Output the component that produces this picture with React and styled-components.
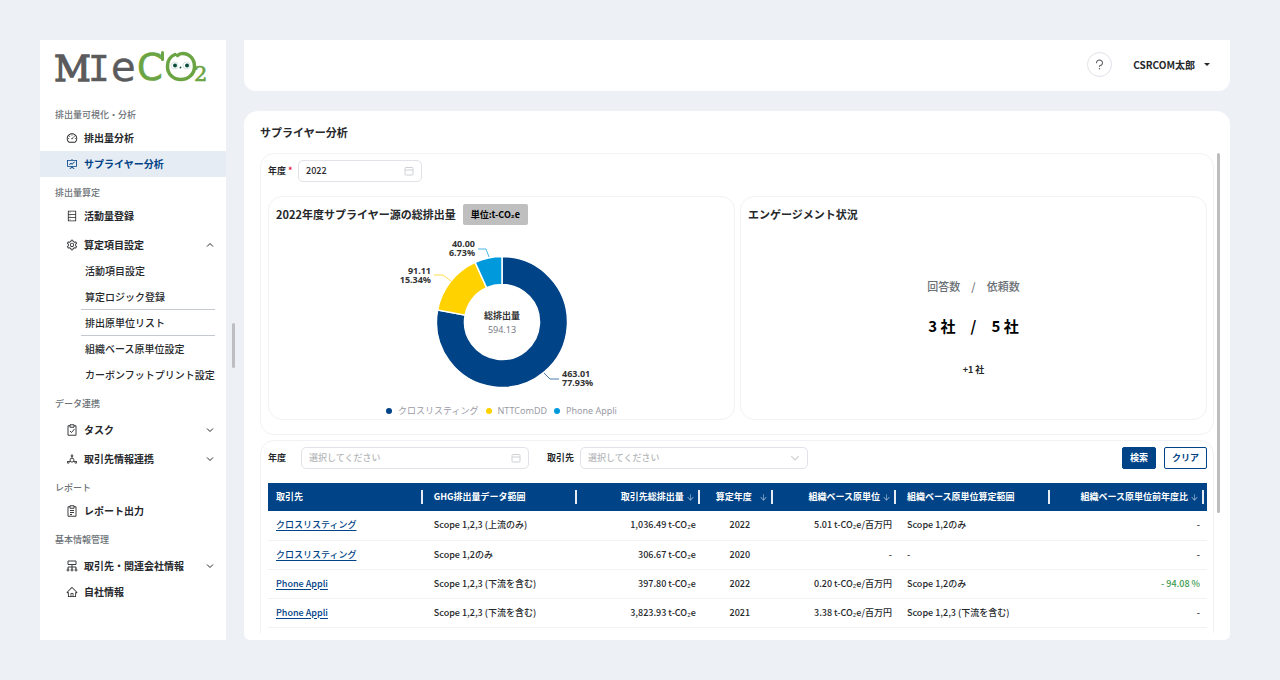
import React, { useState } from 'react'
import styled, { createGlobalStyle, css } from 'styled-components'
import {
  AiOutlineArrowDown,
  AiOutlineDashboard,
  AiOutlineDatabase,
  AiOutlineDeploymentUnit,
  AiOutlineFundProjectionScreen,
  AiOutlineHome,
  AiOutlineQuestion,
  AiOutlineSetting,
} from 'react-icons/ai'

const colors = {
  primary: '#004386',
  yellow: '#ffd200',
  sky: '#0099dc',
  text: '#26282b',
  gray: '#6b7176',
  line: '#f1f2f5',
  page: '#edf1f6',
}

const TaskIcon = () => (
  <svg width="12" height="12" viewBox="0 0 24 24" fill="none" stroke="currentColor" strokeWidth="1.8">
    <path d="M8 3.5H4v19h16v-19h-4" />
    <path d="M8 1.5h8v5H8z" />
    <path d="M8 14l3 3 6-7" />
  </svg>
)

const ReportIcon = () => (
  <svg width="12" height="12" viewBox="0 0 24 24" fill="none" stroke="currentColor" strokeWidth="1.8">
    <path d="M8 3.5H4v19h16v-19h-4" />
    <path d="M8 1.5h8v5H8z" />
    <path d="M8 11h8M8 15h8M8 19h4" />
  </svg>
)

const CompanyIcon = () => (
  <svg width="12" height="12" viewBox="0 0 24 24" fill="none" stroke="currentColor" strokeWidth="1.8">
    <path d="M4 2h16v7H4zM12 9v9M4 18v-4h16v4" />
    <circle cx="4" cy="20" r="2" />
    <circle cx="12" cy="20" r="2" />
    <circle cx="20" cy="20" r="2" />
  </svg>
)

const CalendarIcon = () => (
  <svg viewBox="0 0 10 10" fill="none" stroke="currentColor">
    <rect x="1" y="1.5" width="8" height="7.5" rx="0.8" />
    <path d="M1 4h8" />
  </svg>
)

const ChevronIcon = ({ up }) => (
  <svg viewBox="0 0 8 8" fill="none" stroke="currentColor">
    <path d={up ? 'M1 5.5l3-3 3 3' : 'M1 2.5l3 3 3-3'} />
  </svg>
)

const menu = [
  {
    title: '排出量可視化・分析',
    items: [
      { name: '排出量分析', icon: <AiOutlineDashboard /> },
      { name: 'サプライヤー分析', icon: <AiOutlineFundProjectionScreen />, active: true },
    ],
  },
  {
    title: '排出量算定',
    items: [
      { name: '活動量登録', icon: <AiOutlineDatabase /> },
      {
        name: '算定項目設定',
        icon: <AiOutlineSetting />,
        group: true,
        children: [
          { name: '活動項目設定' },
          { name: '算定ロジック登録', line: true },
          { name: '排出原単位リスト', line: true },
          { name: '組織ベース原単位設定' },
          { name: 'カーボンフットプリント設定' },
        ],
      },
    ],
  },
  {
    title: 'データ連携',
    items: [
      { name: 'タスク', icon: <TaskIcon />, group: true },
      { name: '取引先情報連携', icon: <AiOutlineDeploymentUnit />, group: true },
    ],
  },
  { title: 'レポート', items: [{ name: 'レポート出力', icon: <ReportIcon /> }] },
  {
    title: '基本情報管理',
    items: [
      { name: '取引先・関連会社情報', icon: <CompanyIcon />, group: true },
      { name: '自社情報', icon: <AiOutlineHome /> },
    ],
  },
]

const columns = [
  { name: '取引先', width: 16.8 },
  { name: 'GHG排出量データ範囲', width: 16.4 },
  { name: '取引先総排出量', width: 13.1, align: 'right', sort: true },
  { name: '算定年度', width: 7.8, align: 'center', sort: true },
  { name: '組織ベース原単位', width: 13.1, align: 'right', sort: true },
  { name: '組織ベース原単位算定範囲', width: 16.4 },
  { name: '組織ベース原単位前年度比', width: 16.4, align: 'right', sort: true },
]

const rows = [
  ['クロスリスティング', 'Scope 1,2,3 (上流のみ)', '1,036.49 t-CO₂e', '2022', '5.01 t-CO₂e/百万円', 'Scope 1,2のみ', '-'],
  ['クロスリスティング', 'Scope 1,2のみ', '306.67 t-CO₂e', '2020', '-', '-', '-'],
  ['Phone Appli', 'Scope 1,2,3 (下流を含む)', '397.80 t-CO₂e', '2022', '0.20 t-CO₂e/百万円', 'Scope 1,2のみ', '- 94.08 %'],
  ['Phone Appli', 'Scope 1,2,3 (下流を含む)', '3,823.93 t-CO₂e', '2021', '3.38 t-CO₂e/百万円', 'Scope 1,2,3 (下流を含む)', '-'],
]

const totalEmission = 594.13

const suppliers = [
  { name: 'クロスリスティング', value: 463.01, color: colors.primary },
  { name: 'NTTComDD', value: 91.11, color: colors.yellow },
  { name: 'Phone Appli', value: 40.0, color: colors.sky },
]

const center = { x: 130, y: 90 }

const pointAt = (ratio, radius) => {
  const angle = ratio * Math.PI * 2
  return `${center.x + radius * Math.sin(angle)} ${center.y - radius * Math.cos(angle)}`
}

const slicePath = (from, to) => {
  const large = to - from > 0.5 ? 1 : 0
  return `M${pointAt(from, 65.5)} A65.5 65.5 0 ${large} 1 ${pointAt(to, 65.5)} L${pointAt(to, 37.5)} A37.5 37.5 0 ${large} 0 ${pointAt(from, 37.5)} Z`
}

function Logo() {
  return (
    <LogoSvg width="156" height="38" viewBox="0 0 156 38" role="img" aria-label="MIeCO2">
      <g fill="#5b5b5d" stroke="#5b5b5d">
        <text x="-1" y="31.5" fontSize="36" strokeWidth="1.3">M</text>
        <text x="33" y="31.5" fontSize="36" strokeWidth="0.4" fontFamily="DejaVu Sans Mono">I</text>
        <text x="56" y="31.5" fontSize="40" strokeWidth="0.4" fontFamily="DejaVu Sans">e</text>
      </g>
      <g fill="#6ba442" stroke="#6ba442">
        <text x="82" y="31" fontSize="37" strokeWidth="0.6" fontFamily="DejaVu Sans">C</text>
        <text x="139" y="32" fontSize="21" strokeWidth="0.6">2</text>
        <path d="M107.500 3.500v7" strokeWidth="3" strokeLinecap="round" />
      </g>
      <path
        d="M120 5.500C115 7.500 112.500 12 112.500 17.500c0 7.500 5.500 13 13.300 13S139.500 25 139.500 17.500c0-7.500-5-13-12-13-2 0-3.500 0.500-5 2"
        fill="none"
        stroke="#6ba442"
        strokeWidth="3.500"
        strokeLinecap="round"
      />
      <circle cx="119.5" cy="16.5" r="3.500" fill="#fff" stroke="#c9dcd5" strokeWidth="0.8" />
      <circle cx="131.5" cy="16.5" r="3.500" fill="#fff" stroke="#c9dcd5" strokeWidth="0.8" />
      <circle cx="120" cy="16.5" r="2" fill="#0b4d3a" />
      <circle cx="132" cy="16.5" r="2" fill="#0b4d3a" />
      <circle cx="125.500" cy="18.5" r="0.900" fill="#0b4d3a" />
    </LogoSvg>
  )
}

function Sidebar() {
  return (
    <SidebarWrap>
      <Logo />
      <nav>
        {menu.map(section => (
          <div key={section.title}>
            <MenuTitle>{section.title}</MenuTitle>
            {section.items.map(item => (
              <React.Fragment key={item.name}>
                <MenuItem href="#" $active={item.active} $group={item.group}>
                  {item.icon}
                  <MenuName>{item.name}</MenuName>
                  {item.group && <ChevronIcon up={Boolean(item.children)} />}
                </MenuItem>
                {item.children?.map(child => (
                  <SubItem href="#" key={child.name} $line={child.line}>
                    {child.name}
                  </SubItem>
                ))}
              </React.Fragment>
            ))}
          </div>
        ))}
      </nav>
    </SidebarWrap>
  )
}

function EmissionChart() {
  const sum = suppliers.reduce((acc, item) => acc + item.value, 0)
  let from = 0
  const slices = suppliers.map(item => {
    const start = from
    from += item.value / sum
    return { ...item, path: slicePath(start, from) }
  })

  return (
    <ChartWrap>
      <ChartSvg width="260" height="164" viewBox="0 0 260 164">
        {slices.map(item => (
          <path key={item.name} d={item.path} fill={item.color} stroke="#fff" strokeWidth="1.500" />
        ))}
        <g fill="none" strokeOpacity="0.7">
          <path d="M106 17h8l3 8" stroke={colors.sky} />
          <path d="M62 43h9l8 6" stroke={colors.yellow} />
          <path d="M172 141l6 6h9" stroke={colors.primary} />
        </g>
        <g textAnchor="end">
          <ChartLabel x="103" y="15">40.00</ChartLabel>
          <ChartLabel x="103" y="24">6.73%</ChartLabel>
          <ChartLabel x="59" y="42">91.11</ChartLabel>
          <ChartLabel x="59" y="51">15.34%</ChartLabel>
        </g>
        <ChartLabel x="190" y="145">463.01</ChartLabel>
        <ChartLabel x="190" y="154">77.93%</ChartLabel>
        <g textAnchor="middle">
          <ChartLabel x="130" y="87">総排出量</ChartLabel>
          <ChartTotal x="130" y="101">{totalEmission}</ChartTotal>
        </g>
      </ChartSvg>
      <Legend>
        {suppliers.map(item => (
          <LegendItem key={item.name} $color={item.color}>
            {item.name}
          </LegendItem>
        ))}
      </Legend>
    </ChartWrap>
  )
}

function SupplierTable() {
  return (
    <Table>
      <colgroup>
        {columns.map(col => (
          <Col key={col.name} $width={col.width} />
        ))}
      </colgroup>
      <thead>
        <tr>
          {columns.map(col => (
            <Th key={col.name}>
              <ThInner>
                <ThName $align={col.align}>{col.name}</ThName>
                {col.sort && <AiOutlineArrowDown />}
              </ThInner>
            </Th>
          ))}
        </tr>
      </thead>
      <tbody>
        {rows.map((row, i) => (
          <tr key={i}>
            {row.map((cell, j) => (
              <Td key={j} $align={columns[j].align} $down={cell.startsWith('- ')}>
                {j === 0 ? <SupplierLink href="#">{cell}</SupplierLink> : cell}
              </Td>
            ))}
          </tr>
        ))}
      </tbody>
    </Table>
  )
}

export default function App() {
  const [year, setYear] = useState('2022')

  return (
    <>
      <GlobalStyle />
      <Page>
        <Sidebar />
        <Splitter>
          <SplitterBar />
        </Splitter>
        <Content>
          <Header>
            <HelpButton type="button" aria-label="ヘルプ">
              <AiOutlineQuestion />
            </HelpButton>
            <UserButton type="button">
              CSRCOM太郎
              <Caret />
            </UserButton>
          </Header>
          <Main>
            <PageTitle>サプライヤー分析</PageTitle>
            <ScrollArea>
              <Panels>
                <Panel>
                  <Row>
                    <Label htmlFor="year">
                      年度 <Required>*</Required>
                    </Label>
                    <Field $width={124}>
                      <Input id="year" value={year} onChange={e => setYear(e.target.value)} />
                      <CalendarIcon />
                    </Field>
                  </Row>
                  <Cards>
                    <Card>
                      <CardHead>
                        <CardTitle>2022年度サプライヤー源の総排出量</CardTitle>
                        <Unit>単位:t-CO₂e</Unit>
                      </CardHead>
                      <EmissionChart />
                    </Card>
                    <Card>
                      <CardHead>
                        <CardTitle>エンゲージメント状況</CardTitle>
                      </CardHead>
                      <Engagement>
                        <EngagementHead>
                          <span>回答数</span>
                          <span>/</span>
                          <span>依頼数</span>
                        </EngagementHead>
                        <EngagementCount>
                          <span>3 社</span>
                          <span>/</span>
                          <span>5 社</span>
                        </EngagementCount>
                        <EngagementDiff>+1 社</EngagementDiff>
                      </Engagement>
                    </Card>
                  </Cards>
                </Panel>
                <Panel>
                  <Row>
                    <SearchLabel htmlFor="searchYear">年度</SearchLabel>
                    <Field $width={228}>
                      <Input id="searchYear" placeholder="選択してください" />
                      <CalendarIcon />
                    </Field>
                    <SupplierLabel htmlFor="supplier">取引先</SupplierLabel>
                    <Field $width={228}>
                      <Select id="supplier" defaultValue="">
                        <option value="">選択してください</option>
                        <option value="1">クロスリスティング</option>
                        <option value="2">Phone Appli</option>
                      </Select>
                      <ChevronIcon />
                    </Field>
                    <Buttons>
                      <Button type="button" $primary>検索</Button>
                      <Button type="button">クリア</Button>
                    </Buttons>
                  </Row>
                  <SupplierTable />
                </Panel>
              </Panels>
              <ScrollThumb />
            </ScrollArea>
          </Main>
        </Content>
      </Page>
    </>
  )
}

const GlobalStyle = createGlobalStyle`
  * {
    box-sizing: border-box;
  }
  body {
    margin: 0;
    background-color: ${colors.page};
    color: ${colors.text};
    font-family: "Noto Sans CJK JP", sans-serif;
    font-size: 9px;
    font-weight: 500;
    line-height: 16px;
  }
  button, input, select {
    font: inherit;
    color: inherit;
  }
  svg {
    flex-shrink: 0;
  }
`

const Page = styled.div`
  display: flex;
  height: 100vh;
  padding: 40px 50px 40px 40px;
`

const SidebarWrap = styled.aside`
  width: 186px;
  flex-shrink: 0;
  background-color: #fff;
`

const LogoSvg = styled.svg`
  display: block;
  margin: 9px 0 12px 15px;
  overflow: visible;
  font-family: "DejaVu Serif", serif;
`

const MenuTitle = styled.div`
  height: 26px;
  padding: 8px 15px 2px;
  color: ${colors.gray};
`

const MenuItem = styled.a`
  display: flex;
  align-items: center;
  height: ${props => (props.$group ? '29px' : '26px')};
  padding: ${props => (props.$group ? '3px 12px 0 26px' : '0 12px 0 26px')};
  background-color: ${props => (props.$active ? '#e5ecf4' : 'transparent')};
  color: ${props => (props.$active ? colors.primary : colors.text)};
  font-size: 10px;
  font-weight: 700;
  text-decoration: none;

  svg:first-child {
    width: 12px;
    height: 12px;
  }
  svg:last-child {
    width: 8px;
    height: 8px;
  }
`

const MenuName = styled.span`
  flex: 1;
  margin-left: 6px;
`

const SubItem = styled.a`
  display: flex;
  align-items: center;
  height: 26px;
  margin: 0 11px 0 41px;
  padding-left: 4px;
  border-bottom: ${props => (props.$line ? '1px solid #c4c8cf' : 'none')};
  color: ${colors.text};
  font-size: 10px;
  text-decoration: none;
  white-space: nowrap;
`

const Splitter = styled.div`
  display: flex;
  align-items: center;
  justify-content: center;
  width: 18px;
  flex-shrink: 0;
`

const SplitterBar = styled.div`
  width: 3px;
  height: 45px;
  margin-top: 10px;
  margin-right: 3px;
  border-radius: 2px;
  background-color: #bcbec1;
`

const Content = styled.div`
  display: flex;
  flex: 1;
  flex-direction: column;
  min-width: 0;
`

const Header = styled.header`
  display: flex;
  align-items: center;
  justify-content: flex-end;
  gap: 21px;
  height: 51px;
  flex-shrink: 0;
  margin-bottom: 20px;
  padding: 0 20px 2px 0;
  border-radius: 0 0 12px 12px;
  background-color: #fff;
`

const HelpButton = styled.button`
  display: flex;
  align-items: center;
  justify-content: center;
  width: 25px;
  height: 25px;
  padding: 0;
  border: 1px solid #dfe2e8;
  border-radius: 50%;
  background-color: #fff;
  color: #55585c;
  font-size: 13px;
`

const UserButton = styled.button`
  display: flex;
  align-items: center;
  gap: 9px;
  padding: 0;
  border: none;
  background: none;
  font-size: 10px;
  font-weight: 700;
`

const Caret = styled.span`
  border: 3px solid transparent;
  border-top-color: ${colors.text};
  border-bottom: none;
`

const Main = styled.main`
  display: flex;
  flex: 1;
  flex-direction: column;
  min-height: 0;
  padding: 12px 10px 7px 16px;
  border-radius: 14px 14px 6px 6px;
  background-color: #fff;
`

const PageTitle = styled.h1`
  margin: 0 0 12px;
  font-size: 11px;
  font-weight: 700;
  line-height: 18px;
`

const ScrollArea = styled.div`
  display: flex;
  flex: 1;
  gap: 3px;
  min-height: 0;
  overflow: hidden;
`

const ScrollThumb = styled.div`
  width: 3px;
  height: 75%;
  border-radius: 2px;
  background-color: #bdbdbd;
`

const Panels = styled.div`
  display: flex;
  flex: 1;
  flex-direction: column;
  gap: 5px;
  min-width: 0;
`

const Panel = styled.section`
  flex-shrink: 0;
  padding: 6px 6px 14px 7px;
  border: 1px solid ${colors.line};
  border-radius: 14px;

  &:last-child {
    padding-bottom: 40px;
  }
`

const Row = styled.div`
  display: flex;
  align-items: center;
  height: 22px;
  margin-bottom: 14px;
`

const Label = styled.label`
  width: 30px;
  font-weight: 700;
  white-space: nowrap;
`

const SearchLabel = styled(Label)`
  width: 33px;
`

const SupplierLabel = styled(Label)`
  width: 33px;
  margin-left: 18px;
`

const Required = styled.span`
  color: #e02040;
`

const Field = styled.div`
  display: flex;
  align-items: center;
  width: ${props => props.$width}px;
  height: 22px;
  padding: 0 7px;
  border: 1px solid #e1e3e8;
  border-radius: 5px;

  svg {
    width: 10px;
    height: 10px;
    color: #cfd1d5;
  }
`

const Input = styled.input`
  flex: 1;
  min-width: 0;
  padding: 0;
  border: none;
  background: none;

  &:focus {
    outline: none;
  }
  &::placeholder {
    color: #b5b7ba;
    opacity: 1;
  }
`

const Select = styled.select`
  flex: 1;
  padding: 0;
  border: none;
  background: none;
  color: #b5b7ba;
  appearance: none;
`

const Cards = styled.div`
  display: grid;
  grid-template-columns: 1fr 1fr;
  gap: 5px;
`

const Card = styled.div`
  display: flex;
  flex-direction: column;
  height: 224px;
  padding: 7px;
  border: 1px solid ${colors.line};
  border-radius: 14px;
`

const CardHead = styled.div`
  display: flex;
  align-items: center;
  gap: 7px;
  height: 20px;
`

const CardTitle = styled.h2`
  margin: 0;
  font-size: 11px;
  font-weight: 700;
`

const Unit = styled.span`
  padding: 2px 8px;
  border-radius: 2px;
  background-color: #bfbfbf;
  color: #000;
  font-weight: 700;
  line-height: 17px;
`

const ChartWrap = styled.div`
  display: flex;
  flex-direction: column;
  align-items: center;
  padding-top: 8px;
`

const ChartSvg = styled.svg`
  display: block;
  font-family: "Noto Sans", "Noto Sans CJK JP", sans-serif;
  font-size: 9px;
`

const ChartLabel = styled.text`
  fill: #333;
  font-weight: 700;
`

const ChartTotal = styled.text`
  fill: #777a86;
  font-weight: 400;
`

const Legend = styled.div`
  display: flex;
  gap: 7px;
  margin-top: 7px;
  color: #9a9ba5;
  font-family: "Noto Sans", "Noto Sans CJK JP", sans-serif;
  font-weight: 400;
`

const LegendItem = styled.span`
  display: flex;
  align-items: center;
  gap: 6px;

  &::before {
    content: '';
    width: 6px;
    height: 6px;
    border-radius: 50%;
    background-color: ${props => props.$color};
  }
`

const Engagement = styled.div`
  display: flex;
  flex: 1;
  flex-direction: column;
  align-items: center;
  padding-top: 54px;
`

const EngagementHead = styled.div`
  display: flex;
  gap: 11px;
  color: ${colors.gray};
  font-size: 11px;
`

const EngagementCount = styled.div`
  display: flex;
  gap: 15px;
  margin: 20px 0;
  color: #000;
  font-size: 15px;
  font-weight: 700;
  line-height: 24px;
`

const EngagementDiff = styled.div`
  font-weight: 700;
  line-height: 24px;
`

const Buttons = styled.div`
  display: flex;
  gap: 8px;
  margin-left: auto;
`

const Button = styled.button`
  height: 22px;
  padding: 0 7px;
  border: 1px solid ${colors.primary};
  border-radius: 2px;
  background-color: #fff;
  color: ${colors.primary};
  font-weight: 700;

  ${props =>
    props.$primary &&
    css`
      background-color: ${colors.primary};
      color: #fff;
    `}
`

const Table = styled.table`
  width: 100%;
  table-layout: fixed;
  border-collapse: collapse;
`

const Col = styled.col`
  width: ${props => props.$width}%;
`

const Th = styled.th`
  height: 28px;
  padding: 0 3px 0 8px;
  background-color: ${colors.primary};
  color: #fff;
  font-weight: 700;
  text-align: left;
  white-space: nowrap;
`

const ThInner = styled.div`
  display: flex;
  align-items: center;
  height: 14px;
  padding-right: 3px;
  border-right: 2px solid #e6ecf3;

  svg {
    width: 9px;
    height: 9px;
    margin-left: 2px;
    color: #9dbad6;
  }
`

const ThName = styled.span`
  flex: 1;
  text-align: ${props => props.$align || 'left'};
`

const Td = styled.td`
  height: 29px;
  padding: 0 7px 0 8px;
  border-bottom: 1px solid ${colors.line};
  color: ${props => (props.$down ? '#3c9a4e' : colors.text)};
  text-align: ${props => props.$align || 'left'};
  white-space: nowrap;
`

const SupplierLink = styled.a`
  color: ${colors.primary};
  text-underline-offset: 2px;
`
